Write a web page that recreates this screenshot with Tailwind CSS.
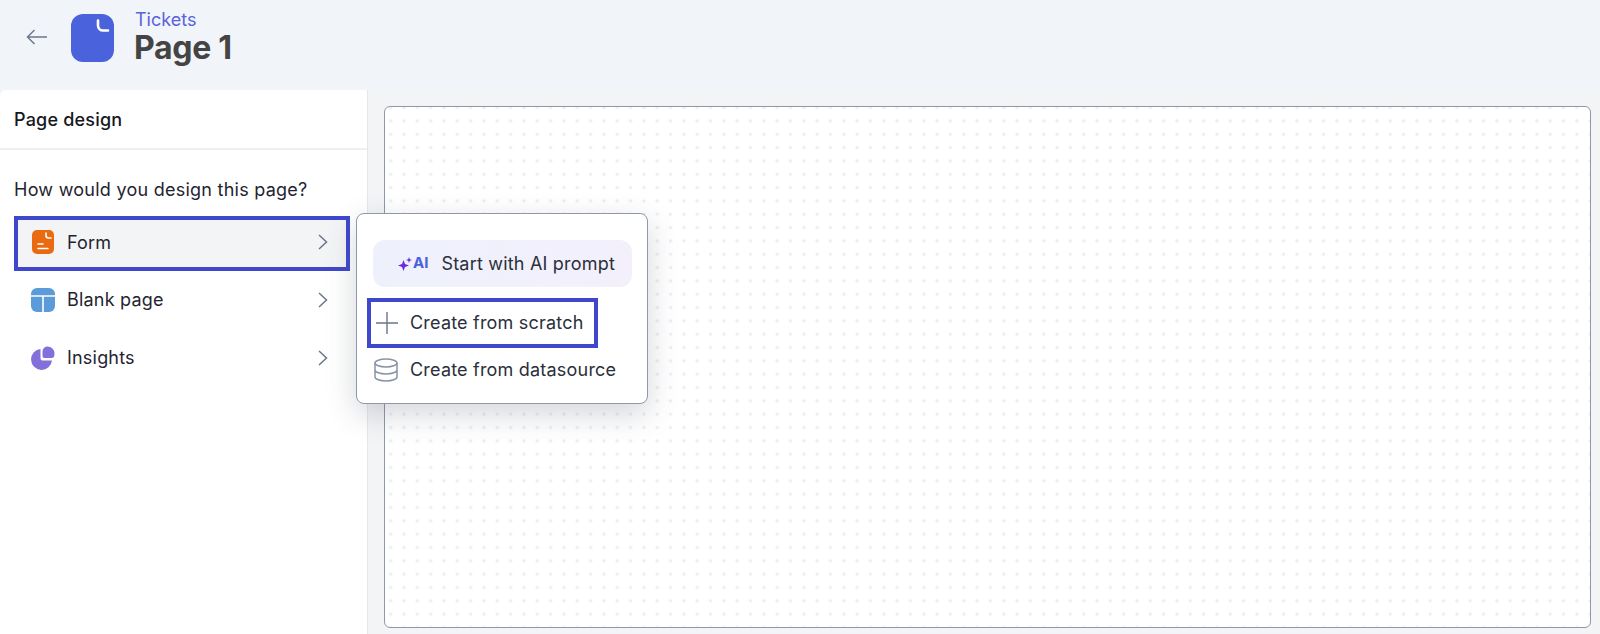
<!DOCTYPE html>
<html lang="en">
<head>
    <meta charset="UTF-8">
    <script src="https://cdn.jsdelivr.net/npm/@tailwindcss/browser@4"></script>
    <title>Page design</title>
</head>
<body class="bg-[#f1f4f9] font-['Inter',sans-serif] overflow-hidden">
    <div class="relative flex h-[634px] flex-col overflow-hidden">
        <!-- Header -->
        <header class="flex h-[90px] shrink-0 items-start pl-[26px] pt-[10px]">
            <svg class="mt-[19px] h-[16px] w-[22px] text-[#6b7689]" viewBox="0 0 22 16" fill="none" stroke="currentColor" stroke-width="1.4"><path d="M21 8H1.5M8.5 1 1.500 8l7 7"/></svg>
            <svg class="ml-[23px] mt-[4px] h-[48px] w-[43px]" viewBox="0 0 43 48" fill="none"><rect width="43" height="48" rx="12" fill="#4a62dc"/><path d="M27 6.500v5a5 5 0 0 0 5 5h5" stroke="#fff" stroke-width="2.600" stroke-linecap="round"/></svg>
            <div class="ml-[21px]">
                <div class="text-[18px] leading-[19px] text-[#5a62dc]">Tickets</div>
                <div class="-ml-[1px] text-[32px] font-bold leading-[37px] tracking-[-0.3px] text-[#444444]">Page 1</div>
            </div>
        </header>

        <div class="flex min-h-0 flex-1">
            <!-- Sidebar -->
            <aside class="w-[368px] shrink-0 rounded-tl-md border-r border-[#e5e7eb] bg-white">
                <div class="flex h-[60px] items-center border-b-2 border-[#eeeff2] pl-[14px] text-[18px] font-medium tracking-[0.2px] text-[#16181d]">Page design</div>
                <p class="mt-[30px] pl-[14px] text-[18px] leading-[20px] tracking-[0.25px] text-[#1f2430]">How would you design this page?</p>
                <div class="mt-[16px]">
                    <div class="mx-[14px] flex h-[55px] w-[336px] items-center border-4 border-[#3f48cc] bg-[#f3f4f6] pb-[3px] pl-[14px] pr-[18px]">
                        <svg class="h-[24px] w-[22px]" viewBox="0 0 22 24"><rect width="22" height="24" rx="5" fill="#ea6a12"/><path d="M14 3v2.500A2.500 2.500 0 0 0 16.500 8H19M6 14h5M6 18.500h10" stroke="#fff" stroke-width="1.600" fill="none" stroke-linecap="round"/></svg>
                        <span class="ml-[13px] flex-1 text-[18px] tracking-[0.2px] text-[#1f2430]">Form</span>
                        <svg class="h-[16px] w-[10px] text-[#6b7689]" viewBox="0 0 10 16" fill="none" stroke="currentColor" stroke-width="1.500"><path d="m1 1 7.500 7L1 15"/></svg>
                    </div>
                    <div class="mt-[1px] flex h-[55px] items-center pl-[31px] pr-[39px]">
                        <svg class="h-[24px] w-[24px]" viewBox="0 0 24 24"><rect width="24" height="24" rx="6" fill="#5b9bd9"/><path d="M0 8h24M12 8v16" stroke="#fff" stroke-width="1.600"/></svg>
                        <span class="ml-[12px] flex-1 text-[18px] tracking-[0.2px] text-[#1f2430]">Blank page</span>
                        <svg class="h-[16px] w-[10px] text-[#6b7689]" viewBox="0 0 10 16" fill="none" stroke="currentColor" stroke-width="1.500"><path d="m1 1 7.500 7L1 15"/></svg>
                    </div>
                    <div class="mt-[3px] flex h-[55px] items-center pl-[31px] pr-[39px]">
                        <svg class="h-[24px] w-[24px]" viewBox="0 0 24 24" fill="#8470db"><path d="M9.500 3A10.500 10.500 0 1 0 21 14.500H11.500a2 2 0 0 1-2-2z"/><path d="M16.500 0.500A7 7 0 0 1 23.500 7.500c0 2.500-.5 4.500-3 4.500h-7a2 2 0 0 1-2-2V5.500a5 5 0 0 1 5-5z"/></svg>
                        <span class="ml-[12px] flex-1 text-[18px] tracking-[0.2px] text-[#1f2430]">Insights</span>
                        <svg class="h-[16px] w-[10px] text-[#6b7689]" viewBox="0 0 10 16" fill="none" stroke="currentColor" stroke-width="1.500"><path d="m1 1 7.500 7L1 15"/></svg>
                    </div>
                </div>
            </aside>

            <!-- Canvas -->
            <main class="min-w-0 flex-1 bg-[#f3f4f6] pb-[6px] pl-[16px] pr-[9px] pt-[16px]">
                <div class="h-full rounded-md border border-[#8f97a8] bg-white bg-[radial-gradient(circle,#eceef3_1.300px,transparent_2px)] bg-[length:13.330px_13.330px] bg-[position:-1px_-6px]"></div>
            </main>
        </div>

        <!-- Popup menu -->
        <div class="absolute left-[356px] top-[213px] h-[191px] w-[292px] rounded-lg border border-[#8f97a8] bg-white shadow-[0_10px_30px_rgba(60,70,90,0.22)]">
            <div class="ml-[16px] mt-[26px] flex h-[47px] w-[259px] items-center rounded-xl bg-gradient-to-r from-[#eef1fc] to-[#f3f0fc] pl-[25px]">
                <svg class="h-[14px] w-[14px]" viewBox="0 0 14 14" fill="#6d2be0"><path d="M5.500 3 7 7l4 1.500L7 10l-1.500 4L4 10 0 8.500 4 7zM11 0l.8 2.200L14 3l-2.200.8L11 6l-.8-2.200L8 3l2.200-.8z"/></svg>
                <span class="ml-[1px] text-[15px] font-bold text-[#4a62dc]">AI</span>
                <span class="ml-[13px] text-[18px] tracking-[0.2px] text-[#2a2f3a]">Start with AI prompt</span>
            </div>
            <div class="ml-[10px] mt-[11px] flex h-[50px] w-[231px] items-center border-4 border-[#3f48cc] pb-[1px] pl-[5px]">
                <svg class="h-[22px] w-[22px] text-[#6b7689]" viewBox="0 0 22 22" fill="none" stroke="currentColor" stroke-width="1.400"><path d="M11 0v22M0 11h22"/></svg>
                <span class="ml-[12px] text-[18px] tracking-[0.2px] text-[#2a2f3a]">Create from scratch</span>
            </div>
            <div class="ml-[17px] mt-[-2px] flex h-[47px] items-center">
                <svg class="h-[24px] w-[24px] text-[#8a94a6]" viewBox="0 0 24 24" fill="none" stroke="currentColor" stroke-width="1.500"><ellipse cx="12" cy="5" rx="11" ry="4"/><path d="M1 5v14c0 2.200 4.900 4 11 4s11-1.800 11-4V5M1 12c0 2.200 4.900 4 11 4s11-1.800 11-4"/></svg>
                <span class="ml-[12px] text-[18px] tracking-[0.2px] text-[#2a2f3a]">Create from datasource</span>
            </div>
        </div>
    </div>
</body>
</html>
